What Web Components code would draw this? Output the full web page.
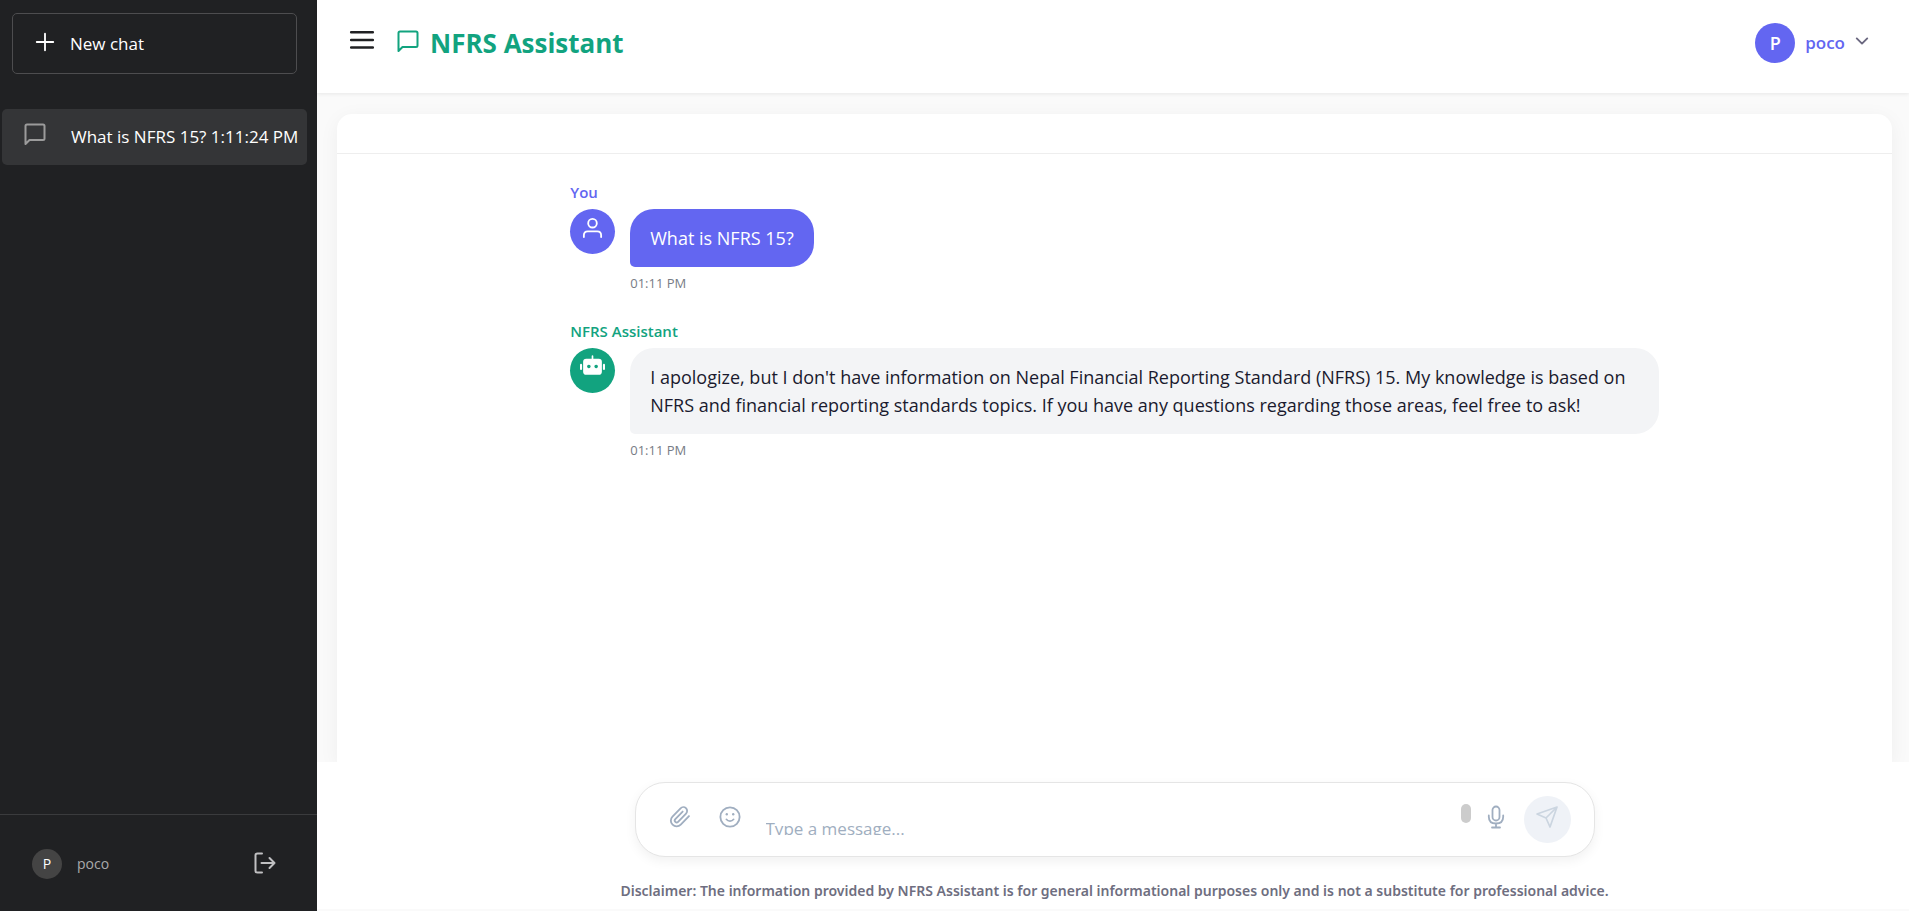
<!DOCTYPE html>
<html lang="en">
<head>
<meta charset="utf-8">
<meta name="viewport" content="width=device-width, initial-scale=1">
<title>NFRS Assistant</title>
<style>
  html, body { height: 100%; margin: 0; }
  body {
    font-family: "Open Sans", "Noto Sans", sans-serif;
    font-size: 17px;
    line-height: 28px;
    color: #1a1a2e;
    background: #fafafa;
    --purple: #6366f1;
    --green: #12a37f;
  }
</style>
</head>
<body>
<chat-app></chat-app>

<template id="chat-app">
  <style>
    :host { display: flex; height: 100vh; overflow: hidden; }
    main { flex: 1; min-width: 0; display: flex; flex-direction: column; padding-bottom: 2px; box-sizing: border-box; }
    chat-panel { flex: 1; min-height: 0; }
  </style>
  <chat-sidebar></chat-sidebar>
  <main>
    <chat-header></chat-header>
    <chat-panel>
      <chat-message kind="user" author="You" time="01:11 PM">What is NFRS 15?</chat-message>
      <chat-message kind="bot" author="NFRS Assistant" time="01:11 PM">I apologize, but I don't have information on Nepal Financial Reporting Standard (NFRS) 15. My knowledge is based on NFRS and financial reporting standards topics. If you have any questions regarding those areas, feel free to ask!</chat-message>
    </chat-panel>
    <chat-composer></chat-composer>
  </main>
</template>

<template id="chat-sidebar">
  <style>
    :host { display: flex; flex-direction: column; flex: 0 0 317px; background: #202123; color: #fff; }
    button { font: inherit; color: inherit; background: none; border: 0; padding: 0; cursor: pointer; }
    .new {
      display: flex; align-items: center; gap: 14px; height: 61px; margin: 13px 20px 0 12px; padding: 0 21px;
      border: 1px solid #4d4d4f; border-radius: 5px;
    }
    .new ui-icon { margin-bottom: 4px; }
    nav { flex: 1; padding: 35px 10px 0 2px; }
    nav a {
      display: flex; align-items: center; gap: 24px; height: 56px; padding: 0 8px 0 21px;
      border-radius: 5px; background: #343537; color: #fff; text-decoration: none; white-space: nowrap;
    }
    nav ui-icon { color: #9b9b9b; margin-bottom: 6px; }
    footer { display: flex; align-items: center; height: 97px; box-sizing: border-box; padding: 0 40px 2px 32px; gap: 15px; border-top: 1px solid #3a3b3d; font-size: 14px; color: #acacbe; }
    .avatar { width: 30px; height: 30px; line-height: 30px; border-radius: 50%; background: #444; color: #fff; text-align: center; margin-top: 4px; }
    .name { flex: 1; margin-top: 4px; color: #a9a9ab; }
    footer button { height: 22px; display: flex; color: #c0c0c2; }
  </style>
  <button class="new" type="button"><ui-icon name="plus" size="22"></ui-icon><span>New chat</span></button>
  <nav aria-label="Chats"><a href="#chat"><ui-icon name="chat" size="24"></ui-icon><span>What is NFRS 15? 1:11:24 PM</span></a></nav>
  <footer>
    <span class="avatar">P</span><span class="name">poco</span>
    <button type="button" aria-label="Log out"><ui-icon name="logout" size="24"></ui-icon></button>
  </footer>
</template>

<template id="chat-header">
  <style>
    :host {
      display: flex; align-items: center; height: 93px; box-sizing: border-box; padding: 0 40px 7px 32px;
      background: #fff; box-shadow: 0 1px 4px rgba(0,0,0,.08); position: relative;
    }
    button { font: inherit; background: none; border: 0; padding: 0; display: flex; align-items: center; cursor: pointer; }
    .menu { color: #202123; margin-bottom: 5px; }
    h1 { flex: 1; display: flex; align-items: center; gap: 10px; margin: 0 0 0 21px; font-size: 26px; line-height: 36px; font-weight: 700; color: var(--green); }
    h1 ui-icon { margin-bottom: 4px; }
    .user { gap: 10px; color: var(--purple); font-weight: 600; }
    .avatar { width: 40px; height: 40px; line-height: 40px; border-radius: 50%; background: var(--purple); color: #fff; font-size: 18px; text-align: center; }
    .user ui-icon { color: #6b6880; margin-bottom: 4px; }
  </style>
  <button class="menu" type="button" aria-label="Toggle sidebar"><ui-icon name="menu" size="26"></ui-icon></button>
  <h1><ui-icon name="chat" size="24"></ui-icon><span>NFRS Assistant</span></h1>
  <button class="user" type="button"><span class="avatar">P</span><span>poco</span><ui-icon name="chevron" size="14"></ui-icon></button>
</template>

<template id="chat-panel">
  <style>
    :host { display: block; overflow: hidden; padding: 21px 17px 0 20px; }
    section { height: 100%; background: #fff; border-radius: 15px 15px 0 0; box-shadow: 0 4px 20px rgba(0,0,0,.05); }
    .bar { height: 39px; border-bottom: 1px solid #eee; }
    .log { width: 70%; margin: 0 auto; padding-top: 25px; }
  </style>
  <section>
    <div class="bar"></div>
    <div class="log"><slot></slot></div>
  </section>
</template>

<template id="chat-message">
  <style>
    :host { display: block; margin-bottom: 18px; --tone: var(--green); }
    :host([kind="user"]) { --tone: var(--purple); }
    .author { color: var(--tone); font-size: 15px; line-height: 26px; font-weight: 600; }
    .row { display: flex; gap: 15px; align-items: flex-start; margin-top: 4px; }
    .avatar { flex: none; width: 45px; height: 45px; border-radius: 50%; background: var(--tone); color: #fff; display: flex; justify-content: center; box-sizing: border-box; padding-top: 7px; }
    .bubble { padding: 15px 20px; border-radius: 24px 24px 24px 5px; background: #f3f4f6; font-size: 18px; line-height: 28px; width: fit-content; }
    :host([kind="user"]) .bubble { background: var(--purple); color: #fff; }
    time { display: block; font-size: 13px; line-height: 20px; color: #777c85; margin-top: 6px; padding-bottom: 7px; }
  </style>
  <div class="author"></div>
  <div class="row">
    <span class="avatar"><ui-icon size="26"></ui-icon></span>
    <div><div class="bubble"><slot></slot></div><time></time></div>
  </div>
</template>

<template id="chat-composer">
  <style>
    :host { display: flex; flex-direction: column; align-items: center; background: #fff; padding: 20px 17px 6px 20px; position: relative; }
    form {
      display: flex; align-items: center; box-sizing: border-box; width: 100%; max-width: 960px; height: 75px; padding: 0 23px 0 33px;
      border: 1px solid #e5e5e5; border-radius: 30px; background: #fff; box-shadow: 0 4px 12px rgba(0,0,0,.06);
    }
    button { background: none; border: 0; padding: 0; display: flex; color: #a0aec0; cursor: pointer; }
    .tool { margin-bottom: 6px; }
    .tool + .tool { margin-left: 28px; }
    textarea {
      flex: 1; min-width: 0; height: 30px; box-sizing: border-box; margin: 0 0 0 25px; padding: 11px 0 0; border: 0; outline: 0; resize: none; overflow: hidden;
      background: none; font: inherit; line-height: 26px; color: inherit;
    }
    textarea::placeholder { color: #a0aec0; opacity: 1; }
    .thumb { width: 10px; height: 19px; border-radius: 5px; background: #ccc; margin: 0 13px 12px 0; }
    .send { width: 47px; height: 47px; margin-left: 16px; border-radius: 50%; background: #eff2f7; color: #cbd5e0; justify-content: center; align-items: center; }
    .send ui-icon { margin-bottom: 5px; }
    p { margin: 22px 0 0; font-family: "Noto Sans", "Open Sans", sans-serif; font-size: 14px; line-height: 24px; font-weight: 600; color: #6e6e80; text-align: center; }
  </style>
  <form>
    <button class="tool" type="button" aria-label="Attach file"><ui-icon name="clip" size="22"></ui-icon></button>
    <button class="tool" type="button" aria-label="Insert emoji"><ui-icon name="smile" size="22"></ui-icon></button>
    <textarea aria-label="Message" placeholder="Type a message..."></textarea>
    <span class="thumb"></span>
    <button class="tool" type="button" aria-label="Voice input"><ui-icon name="mic" size="24"></ui-icon></button>
    <button class="send" type="submit" aria-label="Send" disabled><ui-icon name="send" size="24"></ui-icon></button>
  </form>
  <p>Disclaimer: The information provided by NFRS Assistant is for general informational purposes only and is not a substitute for professional advice.</p>
</template>

<script>
  const icons = {
    plus: '<path d="M12 3v18M3 12h18" stroke-width="2"/>',
    chat: '<path d="M2.500 22V4Q2.500 2.500 4 2.500h16Q21.500 2.500 21.500 4v12.500q0 1.500-1.500 1.500H6.500L2.500 22z" stroke-width="2"/>',
    logout: '<path d="M9 2.500H4.500Q2.500 2.500 2.500 4v16q0 1.500 2 1.500H9M8.500 12h13M16.500 7l5 5-5 5" stroke-width="2"/>',
    menu: '<path d="M2 4h20M2 11h20M2 18h20" stroke-width="2.300"/>',
    chevron: '<path d="M3 7.500l9 9 9-9" stroke-width="3.200"/>',
    user: '<circle cx="12" cy="7.500" r="4.500" stroke-width="1.900"/><path d="M3 22v-2q0-4 4-4h10q4 0 4 4v2" stroke-width="1.900"/>',
    robot: '<g fill="currentColor" stroke="none"><path fill-rule="evenodd" d="M11.200 3.500V1.200q0-.9.8-.9t.8.9V3.500H18q3 0 3 3v9.500q0 3-3 3H6q-3 0-3-3V6.500q0-3 3-3zM8.500 9.300a1.700 1.700 0 1 0 .01 0zM15.500 9.300a1.700 1.700 0 1 0 .01 0z"/><rect x="0" y="8.500" width="2" height="6" rx="1"/><rect x="22" y="8.500" width="2" height="6" rx="1"/></g>',
    clip: '<path d="M21.800 11.500l-9 9.300a6.200 6.200 0 0 1-9-8.800l8.800-9a4.100 4.100 0 0 1 6 5.800l-8.700 9a2.100 2.100 0 0 1-3-3l8-8.200" stroke-width="2" transform="translate(0 -.5)"/>',
    smile: '<circle cx="12" cy="12" r="10.500" stroke-width="2"/><path d="M8 14.500q1.500 2 4 2t4-2" stroke-width="1.800"/><circle cx="8.500" cy="9" r="1.300" fill="currentColor" stroke="none"/><circle cx="15.500" cy="9" r="1.300" fill="currentColor" stroke="none"/>',
    mic: '<rect x="8.500" y="1.500" width="7" height="14" rx="3.500" stroke-width="1.800"/><path d="M4.800 10.500v1.200q0 6.800 7.200 6.800t7.200-6.800v-1.200M12 18.500v3.300M8 22.500h8" stroke-width="1.800"/>',
    send: '<path d="M22 2L2 9l9 4 4 9z M22 2L11 13" stroke-width="1.700"/>'
  };

  class UiIcon extends HTMLElement {
    static observedAttributes = ['name', 'size'];
    constructor() { super(); this.attachShadow({ mode: 'open' }); }
    connectedCallback() { this.render(); }
    attributeChangedCallback() { this.render(); }
    render() {
      const size = this.getAttribute('size') || 24;
      this.shadowRoot.innerHTML = `<style>:host{display:inline-flex;flex:none}svg{display:block;overflow:visible}</style>
        <svg width="${size}" height="${size}" viewBox="0 0 24 24" fill="none" stroke="currentColor" stroke-linecap="round" stroke-linejoin="round" aria-hidden="true">${icons[this.getAttribute('name')] || ''}</svg>`;
    }
  }
  customElements.define('ui-icon', UiIcon);

  class TemplateElement extends HTMLElement {
    constructor() {
      super();
      this.attachShadow({ mode: 'open' })
        .append(document.importNode(document.getElementById(this.localName).content, true));
    }
  }
  customElements.define('chat-sidebar', class extends TemplateElement {});
  customElements.define('chat-header', class extends TemplateElement {});
  customElements.define('chat-panel', class extends TemplateElement {});
  customElements.define('chat-message', class extends TemplateElement {
    connectedCallback() {
      const root = this.shadowRoot;
      root.querySelector('.author').textContent = this.getAttribute('author');
      root.querySelector('time').textContent = this.getAttribute('time');
      const icon = root.querySelector('ui-icon');
      const bot = this.getAttribute('kind') === 'bot';
      icon.setAttribute('name', bot ? 'robot' : 'user');
      icon.setAttribute('size', bot ? '25' : '23');
    }
  });
  customElements.define('chat-composer', class extends TemplateElement {});
  customElements.define('chat-app', class extends TemplateElement {});
</script>
</body>
</html>
